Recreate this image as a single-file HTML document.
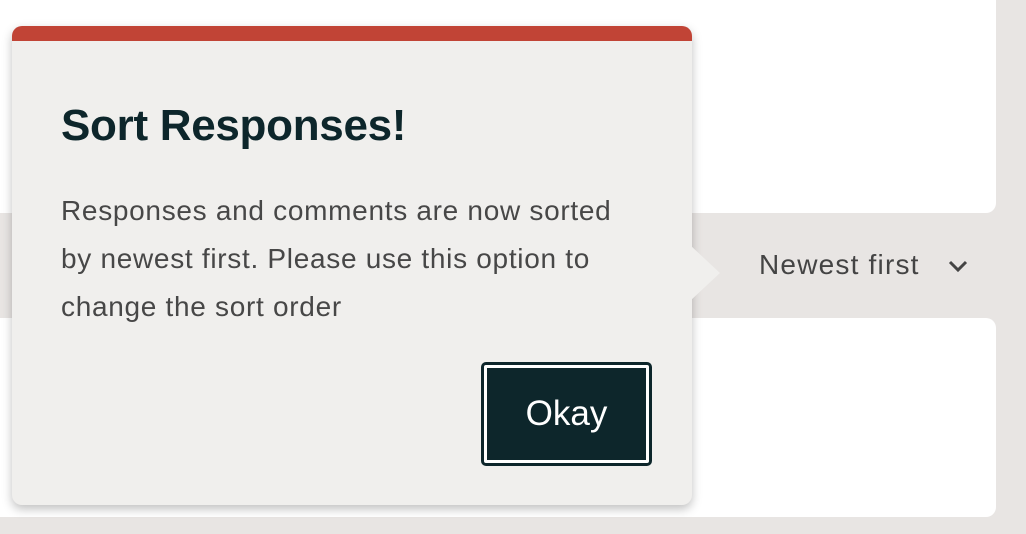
<!DOCTYPE html>
<html><head><style>
*{margin:0;padding:0;box-sizing:border-box}
body{width:1026px;height:534px;background:#e8e5e3;position:relative;overflow:hidden;font-family:"Liberation Sans",Arial,sans-serif}
.card{position:absolute;left:-20px;width:1016px;background:#fff;border-radius:10px}
.pop{position:absolute;left:12px;top:26px;width:680px;height:479px;background:#f0efed;border-radius:10px;box-shadow:0 4px 10px rgba(0,0,0,.25);overflow:visible}
.bar{position:absolute;left:0;top:0;width:100%;height:15px;background:#c14436;border-radius:10px 10px 0 0}
.arrow{position:absolute;left:678px;top:219px;width:0;height:0;border-top:28px solid transparent;border-bottom:28px solid transparent;border-left:30px solid #f0efed}
h1{position:absolute;left:49px;top:75px;font-size:44px;font-weight:bold;color:#0d262b;letter-spacing:-0.3px}
p{position:absolute;left:49px;top:161px;width:640px;font-size:28px;letter-spacing:0.7px;line-height:48px;color:#474747;white-space:nowrap}
.btn{position:absolute;left:469px;top:336px;width:171px;height:104px;border:3px solid #0d262b;border-radius:5px;padding:3px;background:#fff}
.btn div{width:100%;height:100%;background:#0d262b;color:#fff;font-size:35px;display:flex;align-items:center;justify-content:center}
.sort{position:absolute;left:759px;top:249px;font-size:28px;letter-spacing:1.2px;color:#444}
</style></head><body>
<div class="card" style="top:-20px;height:233px"></div>
<div class="card" style="top:318px;height:199px"></div>
<div class="sort">Newest first</div>
<svg style="position:absolute;left:947px;top:259px" width="22" height="14" viewBox="0 0 22 14"><path d="M3 3 L11 11 L19 3" fill="none" stroke="#444" stroke-width="3"/></svg>
<div class="pop">
<div class="bar"></div>
<div class="arrow"></div>
<h1>Sort Responses!</h1>
<p>Responses and comments are now sorted<br>by newest first. Please use this option to<br>change the sort order</p>
<div class="btn"><div>Okay</div></div>
</div>
</body></html>
